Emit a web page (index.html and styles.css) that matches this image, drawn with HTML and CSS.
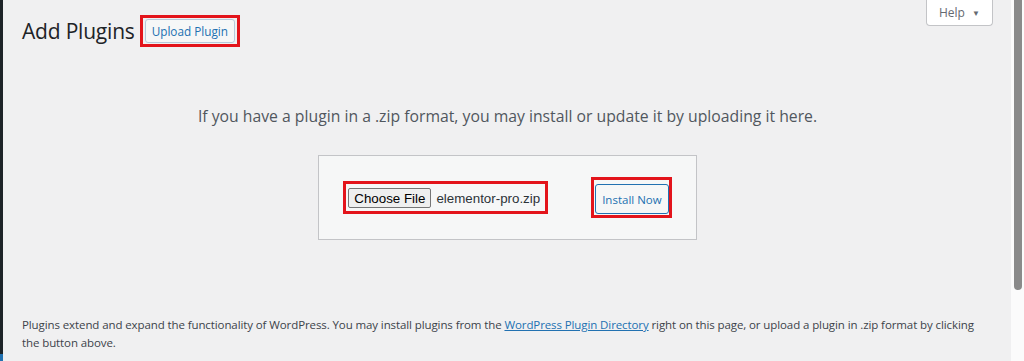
FILE: index.html
```html
<!DOCTYPE html>
<html lang="en">
<head>
    <meta charset="UTF-8">
    <meta name="viewport" content="width=device-width, initial-scale=1.0">
    <title>Add Plugins</title>
    <link rel="stylesheet" href="styles.css">
</head>
<body>
    <div class="admin-edge"><span class="edge-active"></span></div>

    <div class="wrap">
        <div class="top">
            <div class="title-row">
                <h1>Add Plugins</h1>
                <span class="mark mark-title"><a class="page-title-action" href="#">Upload Plugin</a></span>
            </div>
            <button class="help-tab">Help <span class="arrow">&#9660;</span></button>
        </div>

        <p class="install-help">If you have a plugin in a .zip format, you may install or update it by uploading it here.</p>

        <div class="upload-form">
            <span class="mark mark-file">
                <span class="file-button">Choose File</span>
                <span class="file-name">elementor-pro.zip</span>
            </span>
            <span class="mark mark-install"><button class="button">Install Now</button></span>
        </div>

        <p class="footer-text">Plugins extend and expand the functionality of WordPress. You may install plugins from the <a href="#">WordPress Plugin Directory</a> right on this page, or upload a plugin in .zip format by clicking the button above.</p>
    </div>

    <div class="scrollbar"><div class="thumb"></div></div>
</body>
</html>
```

FILE: styles.css
```css
body {
    margin: 0;
    height: 361px;
    overflow: hidden;
    display: flex;
    background: #f0f0f1;
    font-family: 'Open Sans', sans-serif;
    color: #3c434a;
}

.admin-edge {
    width: 3px;
    background: #1d2327;
    display: flex;
    flex-direction: column;
    justify-content: flex-end;
}

.edge-active {
    height: 7px;
    background: #2271b1;
}

.wrap {
    flex: 1;
    padding: 0 18px 0 19px;
    display: flex;
    flex-direction: column;
}

.top {
    display: flex;
    justify-content: space-between;
    align-items: flex-start;
    height: 47px;
}

.title-row {
    display: flex;
    align-items: center;
    gap: 5px;
    padding-top: 15px;
}

.title-row h1 {
    margin: 0;
    font-size: 21px;
    font-weight: 400;
    letter-spacing: -0.2px;
    color: #1d2327;
}

.mark {
    border: 3px solid #e3141b;
    display: inline-flex;
    align-items: center;
}

.mark-title {
    padding: 1px 2px;
}

.page-title-action {
    display: inline-flex;
    align-items: center;
    height: 22px;
    padding: 0 6px;
    border: 1px solid #b6c9da;
    border-radius: 3px;
    background: #f6f7f7;
    color: #2271b1;
    font-size: 11.75px;
    text-decoration: none;
}

.help-tab {
    height: 26px;
    width: 67px;
    background: #fff;
    border: 1px solid #c3c4c7;
    border-top: none;
    border-radius: 0 0 4px 4px;
    color: #646970;
    font-family: 'Open Sans', sans-serif;
    font-size: 12px;
    padding: 0;
}

.help-tab .arrow {
    font-size: 8px;
    margin-left: 4px;
    vertical-align: 1px;
}

.install-help {
    margin: 57px 0 0;
    text-align: center;
    font-size: 15.75px;
    line-height: 24px;
    color: #50575e;
}

.upload-form {
    margin: 27px auto 0;
    background: #f6f7f7;
    border: 1px solid #c3c4c7;
    padding: 21px 24px;
    display: flex;
    align-items: center;
    gap: 43px;
}

.mark-file {
    padding: 4px 5px 3px 2px;
    font-family: 'Liberation Sans', Arial, sans-serif;
    font-size: 13.33px;
    color: #2c3338;
}

.file-button {
    display: inline-flex;
    align-items: center;
    height: 18px;
    padding: 0 5px;
    background: #efefef;
    border: 1px solid #767676;
    border-radius: 2px;
    color: #000;
}

.file-name {
    margin-left: 5px;
}

.mark-install {
    padding: 4px 0 1px 1px;
}

.button {
    height: 30px;
    padding: 0 6px;
    background: #f6f7f7;
    border: 1px solid #2271b1;
    border-radius: 3px;
    color: #2271b1;
    font-family: 'Open Sans', sans-serif;
    font-size: 11.5px;
}

.footer-text {
    margin: 76px 0 0;
    padding-right: 10px;
    font-size: 11.5px;
    letter-spacing: -0.1px;
    line-height: 18px;
}

.footer-text a {
    color: #2271b1;
}

.scrollbar {
    width: 13px;
    background: #fbfbfb;
}

.thumb {
    width: 8px;
    height: 290px;
    margin-left: 3px;
    background: #8a8a8a;
    border-radius: 0 0 4px 4px;
}
```
